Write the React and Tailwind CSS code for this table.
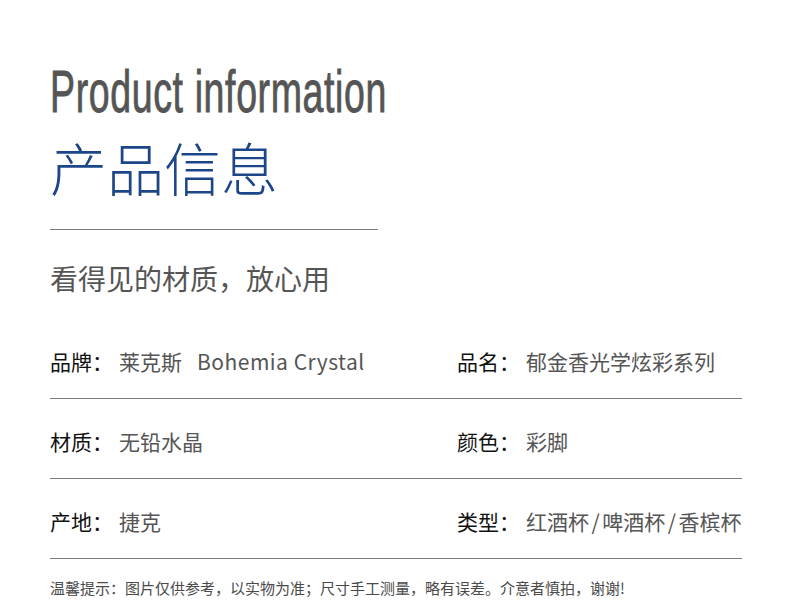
import React from "react";

const rows = [
  [
    { label: "品牌：", value: "莱克斯", latin: "Bohemia Crystal" },
    { label: "品名：", value: "郁金香光学炫彩系列" },
  ],
  [
    { label: "材质：", value: "无铅水晶" },
    { label: "颜色：", value: "彩脚" },
  ],
  [
    { label: "产地：", value: "捷克" },
    { label: "类型：", value: ["红酒杯", "啤酒杯", "香槟杯"] },
  ],
];

const Value = ({ value }) => {
  if (!Array.isArray(value)) return value;
  return value.map((v, i) => (
    <React.Fragment key={i}>
      {i > 0 && <span className="px-[2.5px]">/</span>}
      {v}
    </React.Fragment>
  ));
};

const Cell = ({ item }) => (
  <div className="border-b border-[#7a7a7a] pt-[32px] pb-[26px] flex items-center text-[21px] leading-[21px] whitespace-nowrap">
    <span className="text-[#111]">{item.label}</span>
    <span className="ml-[6px] text-[#555]">
      <Value value={item.value} />
    </span>
    {item.latin && (
      <span className="ml-[15px] text-[#555] tracking-[0.5px]">{item.latin}</span>
    )}
  </div>
);

const App = () => {
  return (
    <div className="w-[790px] h-[610px] bg-white overflow-hidden font-['Noto_Sans_CJK_SC',sans-serif]">
      <div className="pl-[50px] pr-[48px] pt-[62px]">
        <h1 className="h-[60px] text-[60px] leading-[60px] text-[#555] font-['Liberation_Sans',sans-serif] whitespace-nowrap">
          <span className="inline-block origin-left scale-x-[0.625] tracking-[1px] [-webkit-text-stroke:0.9px_#555]">
            Product information
          </span>
        </h1>
        <h2 className="mt-[16px] text-[57px] leading-[57px] text-[#1d4689] font-light">
          产品信息
        </h2>
        <div className="mt-[34px] w-[328px] border-t border-[#7a7a7a]" />
        <p className="mt-[34px] text-[28px] leading-[28px] text-[#555]">
          看得见的材质，放心用
        </p>
        <div className="mt-[27px] grid grid-cols-[407px_1fr]">
          {rows.map((row, i) => (
            <React.Fragment key={i}>
              <Cell item={row[0]} />
              <Cell item={row[1]} />
            </React.Fragment>
          ))}
        </div>
        <p className="mt-[21px] text-[15px] leading-[15px] text-[#4a4a4a] whitespace-nowrap">
          温馨提示：图片仅供参考，以实物为准；尺寸手工测量，略有误差。介意者慎拍，谢谢!
        </p>
      </div>
    </div>
  );
};

export default App;
